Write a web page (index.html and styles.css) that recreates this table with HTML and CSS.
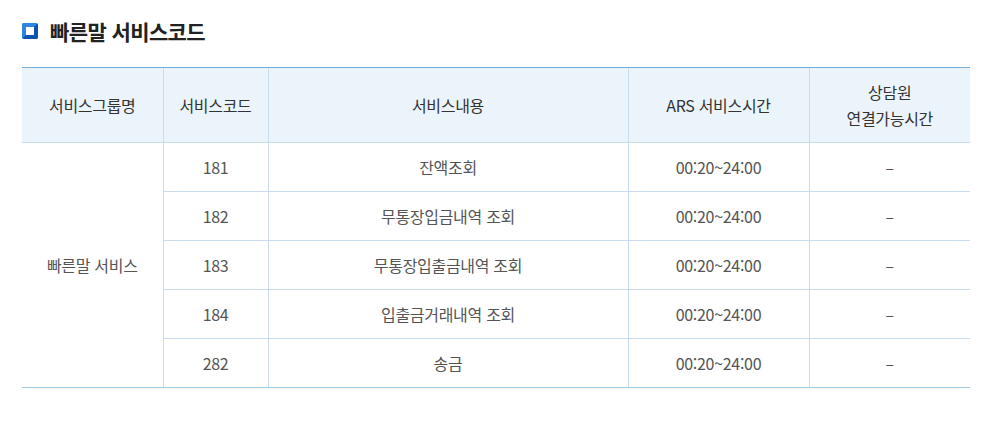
FILE: index.html
```html
<!DOCTYPE html>
<html lang="ko">
<head>
    <meta charset="UTF-8">
    <title>빠른말 서비스코드</title>
    <link rel="stylesheet" href="styles.css">
</head>
<body>
    <div class="wrap">
        <h2 class="tit">
            <span class="tit-icon"></span>
            빠른말 서비스코드
        </h2>
        <table class="code-table">
            <colgroup>
                <col style="width:141px">
                <col style="width:105px">
                <col style="width:360px">
                <col style="width:181px">
                <col>
            </colgroup>
            <thead>
                <tr>
                    <th>서비스그룹명</th>
                    <th>서비스코드</th>
                    <th>서비스내용</th>
                    <th>ARS 서비스시간</th>
                    <th>상담원<br>연결가능시간</th>
                </tr>
            </thead>
            <tbody>
                <tr>
                    <td rowspan="5" class="first">빠른말 서비스</td>
                    <td>181</td>
                    <td>잔액조회</td>
                    <td>00:20~24:00</td>
                    <td>–</td>
                </tr>
                <tr>
                    <td>182</td>
                    <td>무통장입금내역 조회</td>
                    <td>00:20~24:00</td>
                    <td>–</td>
                </tr>
                <tr>
                    <td>183</td>
                    <td>무통장입출금내역 조회</td>
                    <td>00:20~24:00</td>
                    <td>–</td>
                </tr>
                <tr>
                    <td>184</td>
                    <td>입출금거래내역 조회</td>
                    <td>00:20~24:00</td>
                    <td>–</td>
                </tr>
                <tr>
                    <td>282</td>
                    <td>송금</td>
                    <td>00:20~24:00</td>
                    <td>–</td>
                </tr>
            </tbody>
        </table>
    </div>
</body>
</html>
```
FILE: styles.css
```css
body {
    margin: 0;
    background: #fff;
    font-family: "Noto Sans CJK KR", "Noto Sans", sans-serif;
    color: #555;
}
.wrap {
    padding: 17px 32px 0 22px;
}
.tit {
    display: flex;
    align-items: center;
    gap: 12px;
    margin: 0 0 22px;
    font-size: 21px;
    font-weight: 700;
    color: #222;
    line-height: 28px;
    letter-spacing: -0.6px;
}
.tit-icon {
    width: 16px;
    height: 16px;
    box-sizing: border-box;
    border: 4px solid #1466c8;
    border-radius: 2px;
    background: #fff;
    border-color: #2a86e0 #0b54b0 #0b54b0 #2a86e0;
}
.code-table {
    width: 948px;
    border-collapse: collapse;
    table-layout: fixed;
    font-size: 16px;
    letter-spacing: -0.3px;
}
.code-table th,
.code-table td {
    border-left: 1px solid #c9dced;
    border-bottom: 1px solid #c9dced;
    text-align: center;
    font-weight: 400;
    padding: 0;
}
.code-table th {
    border-top: 1px solid #72acd9;
    background: #ecf4fb;
    color: #333;
    height: 74px;
    line-height: 26px;
}
.code-table th:first-child,
.code-table td.first {
    border-left: none;
}
.code-table td.first,
.code-table tbody tr:last-child td {
    border-bottom: 1px solid #a2cae6;
}
.code-table td {
    height: 48px;
    line-height: 20px;
}
```
